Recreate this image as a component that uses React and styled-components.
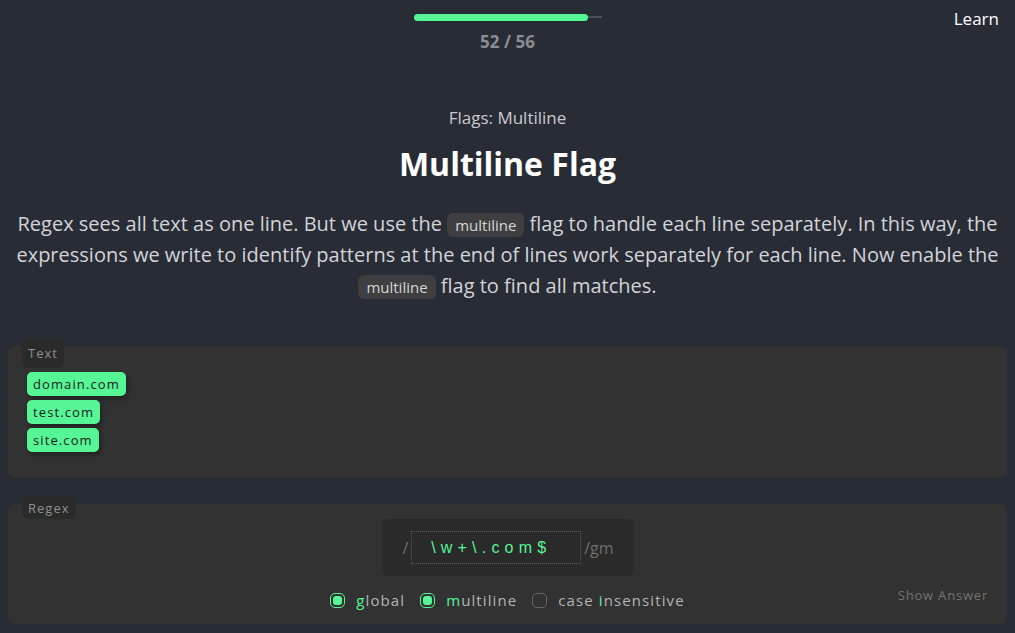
import React from 'react'
import styled, { createGlobalStyle } from 'styled-components'

const GlobalStyle = createGlobalStyle`
  html, body {
    margin: 0;
    padding: 0;
    background: #282c35;
    font-family: 'Open Sans', 'Noto Sans', sans-serif;
  }
`

const matches = ['domain.com', 'test.com', 'site.com']
const flags = [
  { id: 'g', first: 'g', rest: 'lobal', checked: true },
  { id: 'm', first: 'm', rest: 'ultiline', checked: true },
  { id: 'i', first: 'case ', mark: 'i', rest: 'nsensitive', checked: false },
]

const App = () => {
  const done = 52
  const total = 56
  return (
    <Page>
      <GlobalStyle />
      <TopBar>
        <Progress>
          <Track>
            <Fill style={{ width: `${(done / total) * 100}%` }} />
          </Track>
          <Count>
            {done} / {total}
          </Count>
        </Progress>
        <LearnLink>Learn</LearnLink>
      </TopBar>

      <Intro>
        <Subtitle>Flags: Multiline</Subtitle>
        <Title>Multiline Flag</Title>
        <Description>
          Regex sees all text as one line. But we use the <Code>multiline</Code> flag to handle each
          line separately. In this way, the expressions we write to identify patterns at the end of
          lines work separately for each line. Now enable the <Code>multiline</Code> flag to find
          all matches.
        </Description>
      </Intro>

      <Panel $minHeight={132} $top={45}>
        <PanelLabel $tall>Text</PanelLabel>
        <MatchList>
          {matches.map((m) => (
            <Match key={m}>{m}</Match>
          ))}
        </MatchList>
      </Panel>

      <Panel $minHeight={120} $top={26}>
        <PanelLabel>Regex</PanelLabel>
        <RegexBox>
          <Slash>/</Slash>
          <RegexInput>\w+\.com$</RegexInput>
          <Slash>/gm</Slash>
        </RegexBox>
        <FlagRow>
          {flags.map((f) => (
            <Flag key={f.id}>
              <Checkbox $checked={f.checked} />
              <FlagName>
                {f.mark ? (
                  <>
                    {f.first}
                    <em>{f.mark}</em>
                  </>
                ) : (
                  <em>{f.first}</em>
                )}
                {f.rest}
              </FlagName>
            </Flag>
          ))}
        </FlagRow>
        <ShowAnswer>Show Answer</ShowAnswer>
      </Panel>
    </Page>
  )
}

const Page = styled.div`
  width: 1015px;
  min-height: 633px;
  box-sizing: border-box;
  padding: 0 8px;
  display: flex;
  flex-direction: column;
`

const TopBar = styled.div`
  position: relative;
  display: flex;
  justify-content: center;
  padding-top: 14px;
`

const Progress = styled.div`
  display: flex;
  flex-direction: column;
  align-items: center;
`

const Track = styled.div`
  width: 188px;
  height: 2px;
  margin: 2px 0;
  background: #4a4f58;
  display: flex;
  align-items: center;
`

const Fill = styled.div`
  height: 7px;
  border-radius: 4px;
  background: #56f596;
`

const Count = styled.div`
  margin-top: 11px;
  font-size: 17px;
  font-weight: 700;
  color: #8a8d93;
  line-height: 22px;
`

const LearnLink = styled.a`
  position: absolute;
  right: 8px;
  top: 7px;
  font-size: 17px;
  color: #fff;
  cursor: pointer;
`

const Intro = styled.div`
  display: flex;
  flex-direction: column;
  align-items: center;
  text-align: center;
  padding: 0 2px;
  margin-top: 53px;
`

const Subtitle = styled.div`
  font-size: 17px;
  color: #c9cbcf;
  line-height: 24px;
`

const Title = styled.h1`
  margin: 12px 0 0;
  font-size: 32px;
  font-weight: 700;
  color: #fff;
  line-height: 44px;
`

const Description = styled.p`
  margin: 22px 0 0;
  font-size: 20px;
  line-height: 31px;
  color: #d2d4d8;
`

const Code = styled.span`
  display: inline-block;
  background: #3f3f42;
  color: #d6d6d6;
  font-size: 15px;
  line-height: 24px;
  padding: 0 8px;
  border-radius: 6px;
`

const Panel = styled.div`
  position: relative;
  margin-top: ${(p) => p.$top}px;
  min-height: ${(p) => p.$minHeight}px;
  box-sizing: border-box;
  background: #323232;
  border-radius: 8px;
  padding: 26px 19px 12px;
`

const PanelLabel = styled.div`
  position: absolute;
  top: -7px;
  left: 14px;
  background: #2a2a2a;
  color: #8f8f8f;
  font-size: 13px;
  letter-spacing: 1px;
  line-height: 22px;
  padding: ${(p) => (p.$tall ? '3px 6px 4px' : '0 6px')};
  border-radius: 6px;
`

const MatchList = styled.div`
  display: flex;
  flex-direction: column;
  align-items: flex-start;
  gap: 4px;
`

const Match = styled.span`
  background: #56f596;
  color: #1d1d1d;
  font-size: 13px;
  letter-spacing: 1.1px;
  line-height: 24px;
  padding: 0 6px;
  border-radius: 5px;
  box-shadow: 2px 3px 5px rgba(0, 0, 0, 0.35);
`

const RegexBox = styled.div`
  display: flex;
  align-items: center;
  width: 252px;
  margin: -11px auto 0;
  background: #2a2a2a;
  border-radius: 6px;
  padding: 12px 20px 12px 21px;
  box-sizing: border-box;
  gap: 3px;
`

const Slash = styled.span`
  color: #6f6f6f;
  font-size: 16px;
`

const RegexInput = styled.div`
  flex: 1;
  height: 33px;
  border: 1px dotted #5a5a5a;
  box-sizing: border-box;
  display: flex;
  align-items: center;
  justify-content: center;
  color: #56f596;
  font-size: 16px;
  letter-spacing: 5.2px;
  padding-right: 10px;
  font-family: 'Liberation Sans', sans-serif;
`

const FlagRow = styled.div`
  display: flex;
  justify-content: center;
  gap: 15px;
  margin-top: 13px;
`

const Flag = styled.label`
  display: flex;
  align-items: center;
  gap: 11px;
`

const Checkbox = styled.span`
  width: 15px;
  height: 15px;
  box-sizing: border-box;
  border-radius: 5px;
  border: 1.5px solid ${(p) => (p.$checked ? '#56f596' : '#666')};
  padding: 2px;
  display: flex;
  &::after {
    content: '';
    flex: 1;
    border-radius: 3px;
    background: ${(p) => (p.$checked ? '#56f596' : 'transparent')};
  }
`

const FlagName = styled.span`
  font-size: 15px;
  letter-spacing: 1.1px;
  color: #b4b4b4;
  line-height: 22px;
  em {
    font-style: normal;
    color: #56f596;
  }
`

const ShowAnswer = styled.span`
  position: absolute;
  right: 19px;
  bottom: 20px;
  font-size: 13px;
  letter-spacing: 0.8px;
  color: #727272;
  cursor: pointer;
`

export default App
